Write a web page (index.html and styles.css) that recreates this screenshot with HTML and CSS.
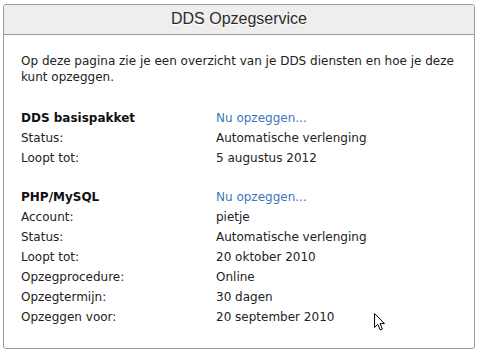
FILE: index.html
```html
<!DOCTYPE html>
<html lang="nl">
<head>
    <meta charset="UTF-8">
    <title>DDS Opzegservice</title>
    <link rel="stylesheet" href="styles.css">
</head>
<body>
    <div class="panel">
        <div class="panel-header">DDS Opzegservice</div>
        <div class="panel-body">
            <p class="intro">Op deze pagina zie je een overzicht van je DDS diensten en hoe je deze kunt opzeggen.</p>

            <div class="service">
                <div class="label name">DDS basispakket</div><div class="value"><a href="#">Nu opzeggen...</a></div>
                <div class="label">Status:</div><div class="value">Automatische verlenging</div>
                <div class="label">Loopt tot:</div><div class="value">5 augustus 2012</div>
            </div>

            <div class="service">
                <div class="label name">PHP/MySQL</div><div class="value"><a href="#">Nu opzeggen...</a></div>
                <div class="label">Account:</div><div class="value">pietje</div>
                <div class="label">Status:</div><div class="value">Automatische verlenging</div>
                <div class="label">Loopt tot:</div><div class="value">20 oktober 2010</div>
                <div class="label">Opzegprocedure:</div><div class="value">Online</div>
                <div class="label">Opzegtermijn:</div><div class="value">30 dagen</div>
                <div class="label">Opzeggen voor:</div><div class="value">20 september 2010</div>
            </div>
        </div>
    </div>

    <!-- mouse pointer from the screenshot -->
    <svg class="pointer" width="14" height="20" viewBox="0 0 14 20">
        <path d="M1.5 1.5 L1.5 15.5 L4.8 12.4 L7.3 18 L9.4 17 L7 11.6 L11.5 11.6 Z" fill="#fff" stroke="#000" stroke-width="1" stroke-linejoin="miter"/>
    </svg>
</body>
</html>
```

FILE: styles.css
```css
* {
    box-sizing: border-box;
    margin: 0;
    padding: 0;
}

body {
    font-family: 'DejaVu Sans', Verdana, sans-serif;
    font-size: 12px;
    color: #222;
    background: #fff;
    padding: 4px 4px 0 3px;
}

.panel {
    width: 472px;
    height: 345px;
    border: 1px solid #999;
    border-radius: 3px;
    overflow: hidden;
}

.panel-header {
    height: 30px;
    line-height: 28px;
    background-color: #eee;
    border-bottom: 1px solid #999;
    text-align: center;
    font-family: 'Liberation Sans', Arial, sans-serif;
    font-size: 16px;
    color: #2a2a2a;
    text-shadow: 0 1px 0 #fff;
}

.panel-body {
    padding: 18px 17px 0 17px;
}

.intro {
    line-height: 16px;
    margin-bottom: 26px;
}

.service {
    display: grid;
    grid-template-columns: 195px 1fr;
    grid-auto-rows: 20px;
    margin-bottom: 19px;
}

.label.name {
    font-weight: bold;
    color: #111;
}

a {
    color: #3a78b8;
    text-decoration: none;
}

.pointer {
    position: absolute;
    left: 373px;
    top: 312px;
}
```
